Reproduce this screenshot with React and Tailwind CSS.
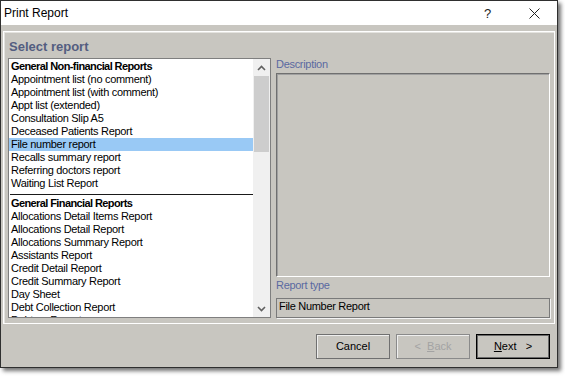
import React from "react";

const nonFinancial = [
  "Appointment list (no comment)",
  "Appointment list (with comment)",
  "Appt list (extended)",
  "Consultation Slip A5",
  "Deceased Patients Report",
  "File number report",
  "Recalls summary report",
  "Referring doctors report",
  "Waiting List Report",
];

const financial = [
  "Allocations Detail Items Report",
  "Allocations Detail Report",
  "Allocations Summary Report",
  "Assistants Report",
  "Credit Detail Report",
  "Credit Summary Report",
  "Day Sheet",
  "Debt Collection Report",
  "Debtors Report",
];

function Row({ children, bold, selected }) {
  return (
    <div
      className={
        "h-[13px] leading-[13px] pl-[2px] whitespace-nowrap " +
        (bold ? "font-bold tracking-[-0.6px] " : "tracking-[-0.3px] ") +
        (selected ? "bg-[#99c9f5]" : "")
      }
    >
      {children}
    </div>
  );
}

function Chevron({ up }) {
  return (
    <svg width="9" height="6" viewBox="0 0 9 6">
      <path
        d={up ? "M1 5 L4.5 1.5 L8 5" : "M1 1 L4.5 4.5 L8 1"}
        fill="none"
        stroke="#606060"
        strokeWidth="1.6"
      />
    </svg>
  );
}

export default function App() {
  return (
    <div
      className="w-[565px] h-[376px] bg-white overflow-hidden text-[11px] text-black"
      style={{ fontFamily: '"Liberation Sans", Arial, sans-serif' }}
    >
      <div className="w-[558px] h-[368px] border border-[#2f2f2f] flex flex-col shadow-[3px_3px_4px_rgba(0,0,0,0.55)] bg-[#c8c6c0]">
        {/* Title bar */}
        <div className="h-[24px] bg-white flex items-center shrink-0">
          <div className="pl-[3px] text-[12px] flex-1">Print Report</div>
          <div className="w-[10px] text-[13px] text-[#222] mr-[35px] leading-none">?</div>
          <svg width="11" height="11" viewBox="0 0 11 11" className="mr-[17px]">
            <path d="M0.5 0.5 L10.5 10.5 M10.5 0.5 L0.5 10.5" stroke="#222" strokeWidth="1" />
          </svg>
        </div>
        {/* Body */}
        <div className="flex-1 flex flex-col pt-[6px] pl-[2px]">
          <div className="w-[552px] h-[293px] border border-white shadow-[inset_1px_1px_0_#e4e3df] flex flex-col pl-[4px] pr-[4px] pb-[5px]">
            <div className="h-[26px] pt-[7px] pl-[1px] text-[13px] leading-[16px] font-bold text-[#535d80]">
              Select report
            </div>
            <div className="flex flex-1 gap-[5px]">
              {/* Listbox */}
              <div className="w-[263px] h-[260px] border border-[#7f7f7f] bg-white flex overflow-hidden">
                <div className="flex-1 pt-[1px] overflow-hidden">
                  <Row bold>General Non-financial Reports</Row>
                  {nonFinancial.map((t) => (
                    <Row key={t} selected={t === "File number report"}>
                      {t}
                    </Row>
                  ))}
                  <div className="h-[7px] pt-[4px] pl-[1px]">
                    <div className="h-[1px] bg-[#1a1a1a]" />
                  </div>
                  <Row bold>General Financial Reports</Row>
                  {financial.map((t) => (
                    <Row key={t}>{t}</Row>
                  ))}
                </div>
                <div className="w-[17px] bg-[#f0f0f0] flex flex-col">
                  <div className="h-[17px] flex items-center justify-center">
                    <Chevron up />
                  </div>
                  <div className="h-[76px] mx-[1px] bg-[#cdcdcd]" />
                  <div className="flex-1" />
                  <div className="h-[17px] flex items-center justify-center">
                    <Chevron />
                  </div>
                </div>
              </div>
              {/* Right column */}
              <div className="w-[274px] flex flex-col">
                <div className="h-[13px] leading-[13px] tracking-[-0.3px] text-[#5a69a0]">Description</div>
                <div className="mt-[2px] h-[204px] border-t border-l border-[#6f6f6f] border-r border-b border-r-white border-b-white shadow-[inset_1px_1px_0_#a0a0a0]" />
                <div className="mt-[2px] h-[13px] leading-[13px] tracking-[-0.3px] text-[#5a69a0]">Report type</div>
                <div className="mt-[6px] h-[20px] border border-[#7a7a7a] pl-[2px] pt-[1px] leading-[13px] tracking-[-0.3px] shadow-[1px_1px_0_#f4f4f4]">
                  File Number Report
                </div>
              </div>
            </div>
          </div>
          {/* Buttons */}
          <div className="mt-[10px] flex justify-end gap-[6px] pr-[7px]">
            <div className="w-[74px] h-[25px] border border-[#707070] shadow-[inset_1px_1px_0_#eeeeee] flex items-center justify-center">
              Cancel
            </div>
            <div className="w-[74px] h-[25px] border border-[#8a8a8a] shadow-[inset_1px_1px_0_#eeeeee] flex items-center justify-center text-[#a3a3a3]">
              <span>&lt;&nbsp;&nbsp;</span>
              <span className="underline">B</span>
              <span>ack</span>
            </div>
            <div className="w-[74px] h-[25px] border border-black shadow-[inset_0_0_0_1px_#6a6a6a] flex items-center justify-center">
              <span className="underline">N</span>
              <span>ext&nbsp;&nbsp;&nbsp;&gt;</span>
            </div>
          </div>
        </div>
      </div>
    </div>
  );
}
